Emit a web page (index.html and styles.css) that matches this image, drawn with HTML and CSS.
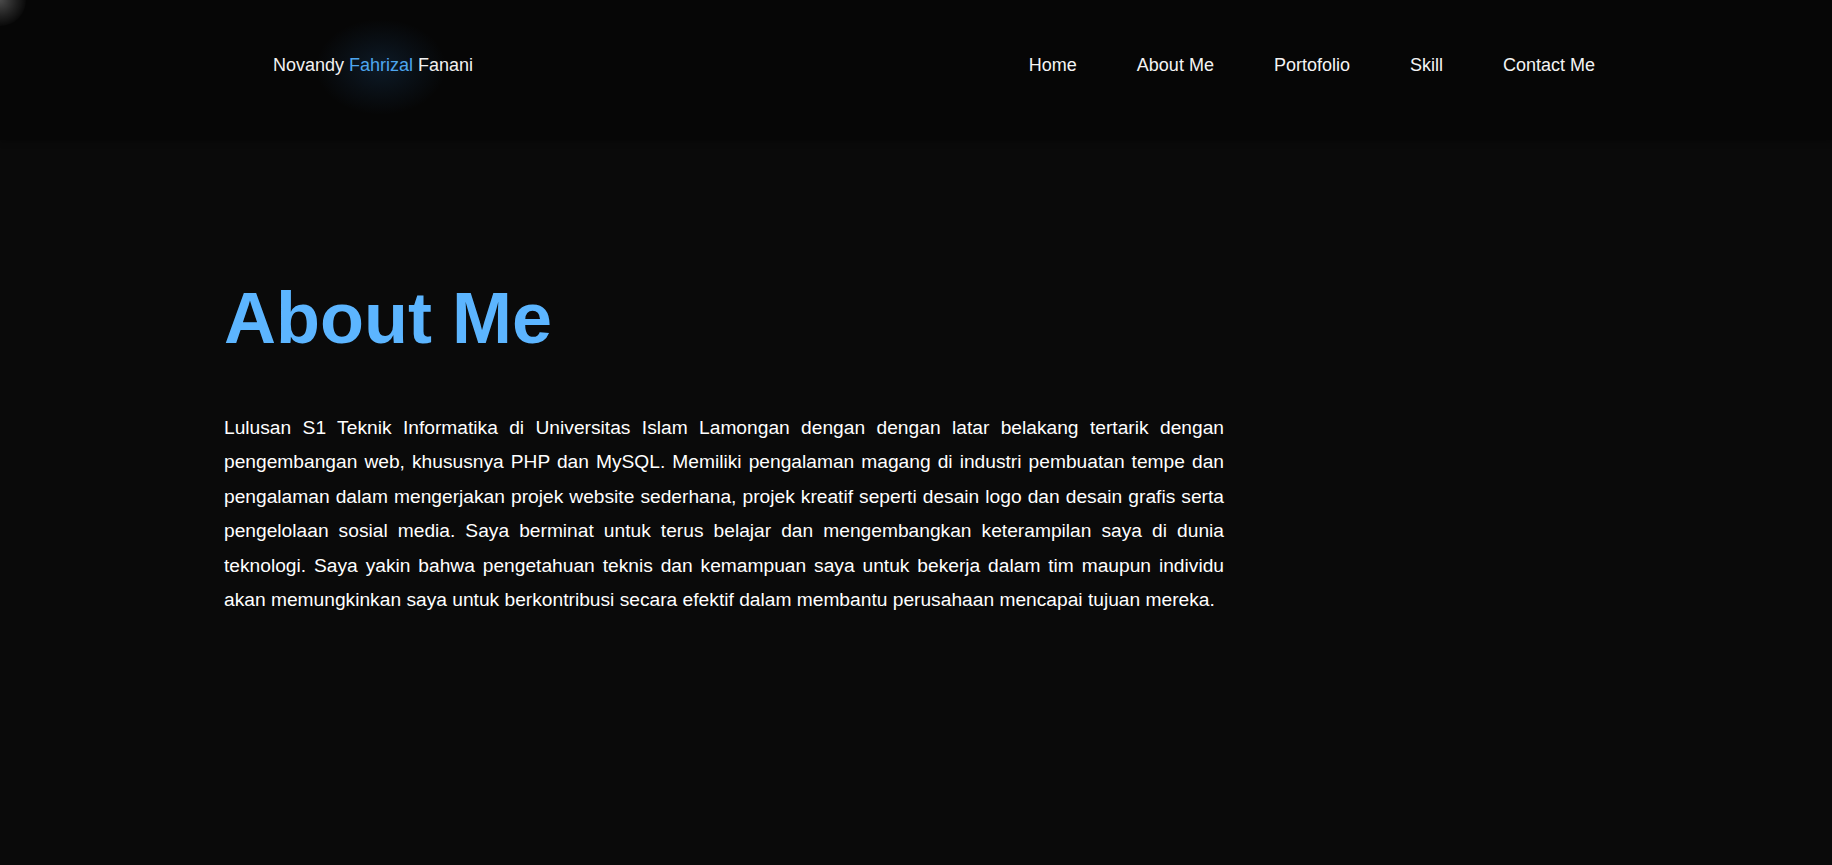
FILE: index.html
```html
<!DOCTYPE html>
<html lang="id">
<head>
<meta charset="utf-8">
<title>About Me - Novandy Fahrizal Fanani</title>
<link rel="stylesheet" href="styles.css">
</head>
<body>
<div class="cursor-glow"></div>
<header class="navbar">
  <div class="brand">Novandy <span class="brand-accent">Fahrizal</span> Fanani</div>
  <nav class="nav-links">
    <a href="#home">Home</a>
    <a href="#about">About Me</a>
    <a href="#portofolio">Portofolio</a>
    <a href="#skill">Skill</a>
    <a href="#contact">Contact Me</a>
  </nav>
</header>
<main class="about" id="about">
  <h1 class="about-title">About Me</h1>
  <p class="about-text">Lulusan S1 Teknik Informatika di Universitas Islam Lamongan dengan dengan latar belakang tertarik dengan pengembangan web, khususnya PHP dan MySQL. Memiliki pengalaman magang di industri pembuatan tempe dan pengalaman dalam mengerjakan projek website sederhana, projek kreatif seperti desain logo dan desain grafis serta pengelolaan sosial media. Saya berminat untuk terus belajar dan mengembangkan keterampilan saya di dunia teknologi. Saya yakin bahwa pengetahuan teknis dan kemampuan saya untuk bekerja dalam tim maupun individu akan memungkinkan saya untuk berkontribusi secara efektif dalam membantu perusahaan mencapai tujuan mereka.</p>
</main>
</body>
</html>
```

FILE: styles.css
```css
* {
  box-sizing: border-box;
}

html, body {
  margin: 0;
  padding: 0;
}

body {
  background: #0a0a0a;
  color: #ffffff;
  font-family: "Liberation Sans", Arial, sans-serif;
  min-height: 865px;
  overflow: hidden;
}

.cursor-glow {
  position: absolute;
  top: -26px;
  left: -26px;
  width: 52px;
  height: 52px;
  border-radius: 50%;
  background: radial-gradient(circle, rgba(255,255,255,0.28) 0%, rgba(255,255,255,0.1) 45%, rgba(255,255,255,0) 75%);
  pointer-events: none;
  z-index: 5;
}

.navbar {
  position: relative;
  z-index: 1;
  height: 140px;
  background: #060606;
  display: flex;
  align-items: center;
  justify-content: space-between;
  padding: 0 237px 10px 273px;
  box-shadow: 0 2px 6px rgba(0,0,0,0.3);
}

.brand {
  font-size: 18px;
  color: #f2f2f2;
}

.brand-accent {
  position: relative;
  color: #4ea6ef;
}

.brand-accent::before {
  content: "";
  position: absolute;
  left: 50%;
  top: 62%;
  width: 130px;
  height: 96px;
  transform: translate(-50%, -50%);
  border-radius: 50%;
  background: radial-gradient(ellipse closest-side, rgba(50,130,210,0.16) 0%, rgba(50,130,210,0.07) 55%, rgba(50,130,210,0) 100%);
  z-index: -1;
  pointer-events: none;
}

.nav-links {
  display: flex;
  gap: 60px;
}

.nav-links a {
  color: #f4f4f4;
  text-decoration: none;
  font-size: 18px;
}

.about {
  padding: 142px 0 0 224px;
}

.about-title {
  margin: 0;
  font-size: 72px;
  line-height: 72px;
  font-weight: 700;
  color: #5cb5ff;
}

.about-text {
  margin: 57px 0 0;
  width: 1000px;
  font-size: 19.2px;
  line-height: 34.4px;
  text-align: justify;
  color: #ffffff;
}
```
